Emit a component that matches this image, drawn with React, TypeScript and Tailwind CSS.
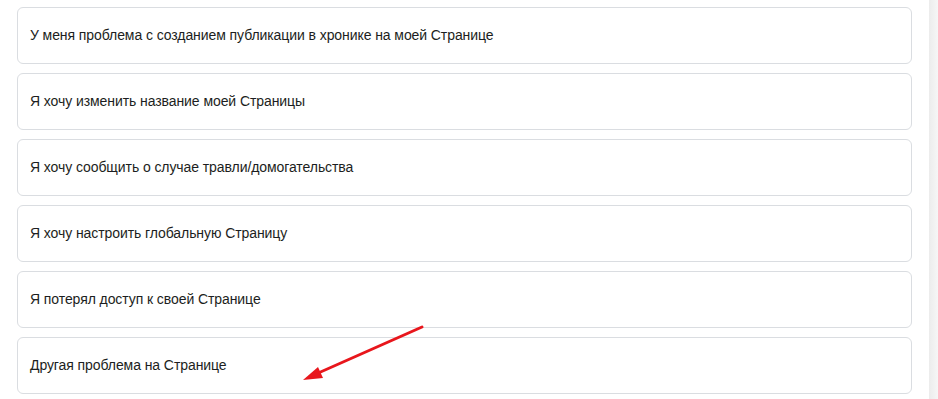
import React from "react";

const items = [
  "У меня проблема с созданием публикации в хронике на моей Странице",
  "Я хочу изменить название моей Страницы",
  "Я хочу сообщить о случае травли/домогательства",
  "Я хочу настроить глобальную Страницу",
  "Я потерял доступ к своей Странице",
  "Другая проблема на Странице",
];

export default function App() {
  return (
    <div
      className="relative flex h-[399px] w-[938px] overflow-hidden bg-white"
      style={{ fontFamily: '"Liberation Sans", Arial, sans-serif' }}
    >
      <div className="flex w-[929px] flex-col gap-[9px] pl-[17px] pr-[17px] pt-[7px]">
        {items.map((t) => (
          <div
            key={t}
            className="flex h-[57px] shrink-0 items-center rounded-[6px] border border-[#dadde1] bg-white px-[12px] text-[14px] tracking-[-0.08px] text-[#1c1e21]"
          >
            {t}
          </div>
        ))}
      </div>
      <div className="h-full w-[9px] bg-gradient-to-r from-[#ececec] to-[#f6f6f6]" />
      <svg
        className="pointer-events-none absolute left-0 top-0"
        width="938"
        height="399"
        viewBox="0 0 938 399"
      >
        <line x1="422" y1="327" x2="316" y2="374" stroke="#e8161c" strokeWidth="3" strokeLinecap="round" />
        <polygon points="303,380 318,367 323,378" fill="#e8161c" />
      </svg>
    </div>
  );
}
